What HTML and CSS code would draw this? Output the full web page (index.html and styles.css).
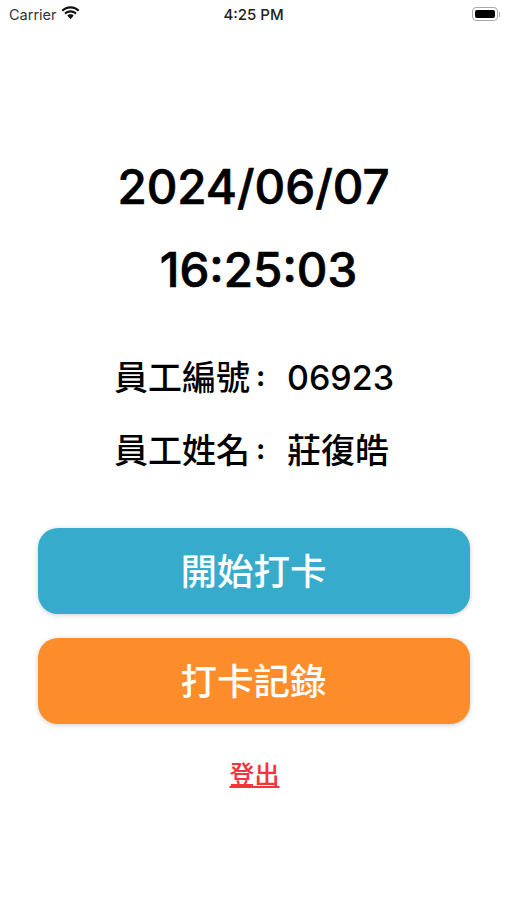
FILE: index.html
```html
<!DOCTYPE html>
<html lang="zh-Hant">
<head>
    <meta charset="UTF-8">
    <meta name="viewport" content="width=device-width, initial-scale=1.0">
    <title>打卡</title>
    <link rel="stylesheet" href="styles.css">
</head>
<body>
    <div class="status-bar">
        <div class="status-left">
            <span>Carrier</span>
            <svg class="wifi" width="19" height="14" viewBox="0 0 19 14">
                <path d="M9.5 2.6c2.9 0 5.5 1.1 7.4 3l1.6-1.700C16.200 1.600 13 0.200 9.500 0.200S2.800 1.600 0.500 3.900l1.600 1.700c1.900-1.900 4.500-3 7.400-3z"/>
                <path d="M9.500 6.600c1.800 0 3.400 0.700 4.600 1.800l1.600-1.700C14.100 5.200 11.900 4.200 9.500 4.200S4.900 5.200 3.300 6.700l1.600 1.700C6.100 7.300 7.700 6.600 9.500 6.600z"/>
                <path d="M9.500 8.200c-1.300 0-2.400 0.500-3.200 1.300l3.200 3.700 3.200-3.700C11.900 8.700 10.800 8.200 9.500 8.200z"/>
            </svg>
        </div>
        <div class="status-time">4:25 PM</div>
        <div class="battery">
            <div class="battery-body"><div class="battery-fill"></div></div>
            <div class="battery-cap"></div>
        </div>
    </div>

    <div class="clock">
        <div class="clock-line">2024/06/07</div>
        <div class="clock-line clock-time">16:25:03</div>
    </div>

    <div class="employee">
        <div class="employee-row"><span class="employee-label">員工編號<span class="colon">:</span></span><span>06923</span></div>
        <div class="employee-row"><span class="employee-label">員工姓名<span class="colon">:</span></span><span>莊復皓</span></div>
    </div>

    <div class="actions">
        <button type="button" class="action-btn start-btn">開始打卡</button>
        <button type="button" class="action-btn record-btn">打卡記錄</button>
    </div>

    <a href="#" class="logout">登出</a>
</body>
</html>
```

FILE: styles.css
```css
* {
    margin: 0;
    padding: 0;
    box-sizing: border-box;
}

body {
    width: 507px;
    height: 900px;
    background: #fff;
    color: #000;
    font-family: "Inter", "Noto Sans CJK TC", sans-serif;
    overflow: hidden;
}

.status-bar {
    display: flex;
    justify-content: space-between;
    align-items: center;
    height: 28px;
    padding: 0 7px 0 9px;
    position: relative;
}

.status-left {
    display: flex;
    align-items: center;
    gap: 4px;
    font-size: 14.5px;
    color: #333;
}

.wifi {
    fill: #111;
    margin-bottom: 2px;
}

.status-time {
    position: absolute;
    left: 0;
    right: 0;
    text-align: center;
    font-size: 15px;
    font-weight: 500;
    color: #222;
}

.battery {
    display: flex;
    align-items: center;
    gap: 1px;
}

.battery-body {
    width: 26px;
    height: 14px;
    border: 1px solid #aaa;
    border-radius: 4px;
    padding: 2px;
}

.battery-fill {
    height: 100%;
    background: #000;
    border-radius: 2px;
}

.battery-cap {
    width: 1px;
    height: 5px;
    background: #aaa;
}

.clock {
    display: flex;
    flex-direction: column;
    align-items: center;
    gap: 25px;
    margin-top: 130px;
}

.clock-line {
    font-size: 47.5px;
    line-height: 58px;
    font-weight: 500;
    -webkit-text-stroke: 0.7px #000;
}

.clock-time {
    padding-left: 10px;
}

.employee {
    display: flex;
    flex-direction: column;
    gap: 32px;
    margin-top: 58px;
    padding-left: 114px;
}

.employee-row {
    display: flex;
    font-size: 34px;
    line-height: 41px;
    font-weight: 500;
}

.employee-label {
    width: 173px;
    white-space: nowrap;
}

.colon {
    margin-left: 6px;
    font-size: 28px;
    font-weight: 700;
    line-height: 1;
    vertical-align: 4px;
}

.actions {
    display: flex;
    flex-direction: column;
    gap: 24px;
    margin: 57px 37px 0 38px;
}

.action-btn {
    height: 86px;
    padding: 0 1px 4px 0;
    border: none;
    border-radius: 20px;
    color: #fff;
    font-family: inherit;
    font-size: 36.5px;
    font-weight: 500;
    box-shadow: 0 1px 5px rgba(0, 0, 0, 0.2);
}

.start-btn {
    background: #36abcc;
}

.record-btn {
    background: #fd8d2a;
}

.logout {
    display: block;
    width: 50px;
    margin: 36px auto 0;
    padding-left: 1px;
    font-size: 25px;
    font-weight: 500;
    line-height: 30px;
    color: #f5333b;
    text-align: center;
    white-space: nowrap;
}
```
